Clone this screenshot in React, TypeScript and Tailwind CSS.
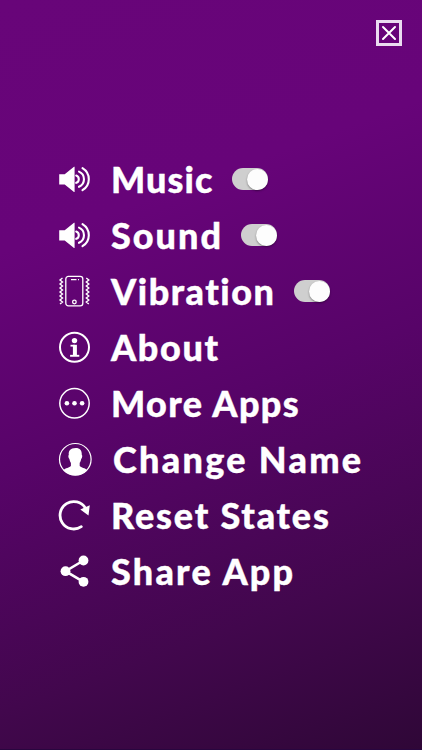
import { useState } from "react";
import type { ReactNode } from "react";

function SpeakerIcon() {
  return (
    <svg width="32" height="32" viewBox="0 0 32 32" fill="none">
      <path d="M1.200 11.200h5.500L16 3.800h.6v25.200H16L6.700 21.400H1.200z" fill="white" />
      <path
        d="M18.200 12.600a3.800 3.800 0 0 1 0 7.200M21 8.600a8.300 8.300 0 0 1 0 15.200M24.500 5.200c3.900 2.400 6.300 6.400 6.300 11s-2.400 8.600-6.300 11"
        stroke="white"
        strokeWidth="2.100"
        strokeLinecap="round"
      />
    </svg>
  );
}

function VibrationIcon() {
  return (
    <svg width="32" height="32" viewBox="0 0 32 32" fill="none" stroke="white">
      <rect x="7.800" y="1.400" width="17" height="29.400" rx="2.600" strokeWidth="1.300" />
      <path d="M13 4.700h5.500M20 4.700h1" strokeWidth="1.200" />
      <circle cx="16.400" cy="27" r="1.800" strokeWidth="1.300" />
      <path
        d="M4.500 3 2 5l2.500 2L2 9l2.500 2L2 13l2.500 2L2 17l2.500 2L2 21l2.500 2L2 25l2.500 2L2 29M28.300 3l2.500 2-2.500 2 2.500 2-2.500 2 2.500 2-2.500 2 2.500 2-2.500 2 2.500 2-2.500 2 2.500 2-2.500 2 2.500 2"
        strokeWidth="1.400"
      />
    </svg>
  );
}

function InfoIcon() {
  return (
    <svg width="32" height="32" viewBox="0 0 32 32" fill="none" stroke="white">
      <circle cx="16.500" cy="16.300" r="14.500" strokeWidth="2" />
      <circle cx="16.500" cy="9.600" r="2.700" fill="white" stroke="none" />
      <path d="M12.500 14.700H17" strokeWidth="1.800" />
      <path d="M16.900 13.800v11" strokeWidth="4" />
      <path d="M12.100 24.800h9.200" strokeWidth="1.900" />
    </svg>
  );
}

function MoreIcon() {
  return (
    <svg width="32" height="32" viewBox="0 0 32 32" fill="white">
      <circle cx="16.500" cy="16.300" r="14.700" fill="none" stroke="white" strokeWidth="1.500" />
      <circle cx="8.900" cy="16.300" r="2.300" />
      <circle cx="16.500" cy="16.300" r="2.300" />
      <circle cx="24.100" cy="16.300" r="2.300" />
    </svg>
  );
}

function UserIcon() {
  return (
    <svg width="34" height="34" viewBox="0 0 34 34" fill="white">
      <circle cx="17.300" cy="17.300" r="15.800" fill="none" stroke="white" strokeWidth="1.200" />
      <path d="M17.800 5.900c4.100 0 6.300 2.500 6 7 .8.200.5 3.200-.6 4-.4 1.900-.8 3-1.500 3.900v3.300c1.300 1.700 5.600 1.900 7.500 4.200-2.800 3.100-7 5-11.900 5s-9.100-1.900-11.900-5c1.900-2.300 6.200-2.500 7.500-4.200v-3.300c-.7-.9-1.100-2-1.500-3.900-1.100-.8-1.400-3.800-.6-4-.5-3.900 1.400-7 7-7z" />
    </svg>
  );
}

function ResetIcon() {
  return (
    <svg width="32" height="32" viewBox="0 0 32 32" fill="none">
      <path
        d="M27.500 9.200A13.700 13.700 0 1 0 23.300 27.700"
        stroke="white"
        strokeWidth="2.800"
        strokeLinecap="round"
      />
      <path d="M31.800 6.200 30.500 16.600 22.300 10.500z" fill="white" />
    </svg>
  );
}

function ShareIcon() {
  return (
    <svg width="32" height="32" viewBox="0 0 32 32" fill="white">
      <path d="M25.500 5.500 7.500 16.200l18 10.600" fill="none" stroke="white" strokeWidth="2.600" />
      <circle cx="25.500" cy="5.500" r="4.900" />
      <circle cx="7.500" cy="16.200" r="4.900" />
      <circle cx="25.500" cy="26.800" r="4.900" />
    </svg>
  );
}

function Toggle({ label }: { label: string }) {
  const [on, setOn] = useState(true);

  return (
    <button
      type="button"
      role="switch"
      aria-checked={on}
      aria-label={label}
      onClick={() => setOn(!on)}
      className={`flex h-[22px] w-9 shrink-0 items-center rounded-full bg-[#cfcfcf] ${on ? "justify-end" : "justify-start"}`}
    >
      <span className="size-[21px] rounded-full bg-[#fdfdfd] shadow-[0_1px_2px_rgba(0,0,0,0.4)]" />
    </button>
  );
}

interface MenuItem {
  label: string;
  icon: ReactNode;
  className: string;
  toggle?: boolean;
}

const items: MenuItem[] = [
  { label: "Music", icon: <SpeakerIcon />, className: "w-[121px] tracking-[1.1px]", toggle: true },
  { label: "Sound", icon: <SpeakerIcon />, className: "w-[129.5px] tracking-[2px]", toggle: true },
  { label: "Vibration", icon: <VibrationIcon />, className: "w-[183px] tracking-[1.5px]", toggle: true },
  { label: "About", icon: <InfoIcon />, className: "tracking-[1.6px]" },
  { label: "More Apps", icon: <MoreIcon />, className: "tracking-[1.4px]" },
  { label: "Change Name", icon: <UserIcon />, className: "tracking-[2.3px]" },
  { label: "Reset States", icon: <ResetIcon />, className: "tracking-[1.8px]" },
  { label: "Share App", icon: <ShareIcon />, className: "tracking-[2.200px]" },
];

export default function App() {
  return (
    <main className="flex h-[750px] w-[422px] flex-col overflow-hidden border-b border-[#29063f] bg-[linear-gradient(160deg,#680579_0%,#670479_28%,#570468_53%,#42074d_79%,#2f0737_100%)] font-['Lato','Open_Sans',sans-serif] text-white">
      <header className="flex h-[151px] shrink-0 justify-end pt-5 pr-5">
        <button
          type="button"
          aria-label="Close"
          className="flex size-[26px] items-center justify-center border-[3px] border-[#eadcf0]"
        >
          <svg width="16" height="16" viewBox="0 0 16 16" fill="none">
            <path d="m2 2 12 12M14 2 2 14" stroke="white" strokeWidth="2" strokeLinecap="round" />
          </svg>
        </button>
      </header>

      <nav className="flex flex-col pl-[58px]">
        {items.map((item) => (
          <div key={item.label} className="flex h-14 items-center">
            <span className="mr-[21px] shrink-0">{item.icon}</span>
            <span
              className={`shrink-0 text-[36px] leading-[56px] font-black whitespace-nowrap [-webkit-text-stroke:0.4px_white] ${item.className}`}
            >
              {item.label}
            </span>
            {item.toggle && <Toggle label={item.label} />}
          </div>
        ))}
      </nav>
    </main>
  );
}
